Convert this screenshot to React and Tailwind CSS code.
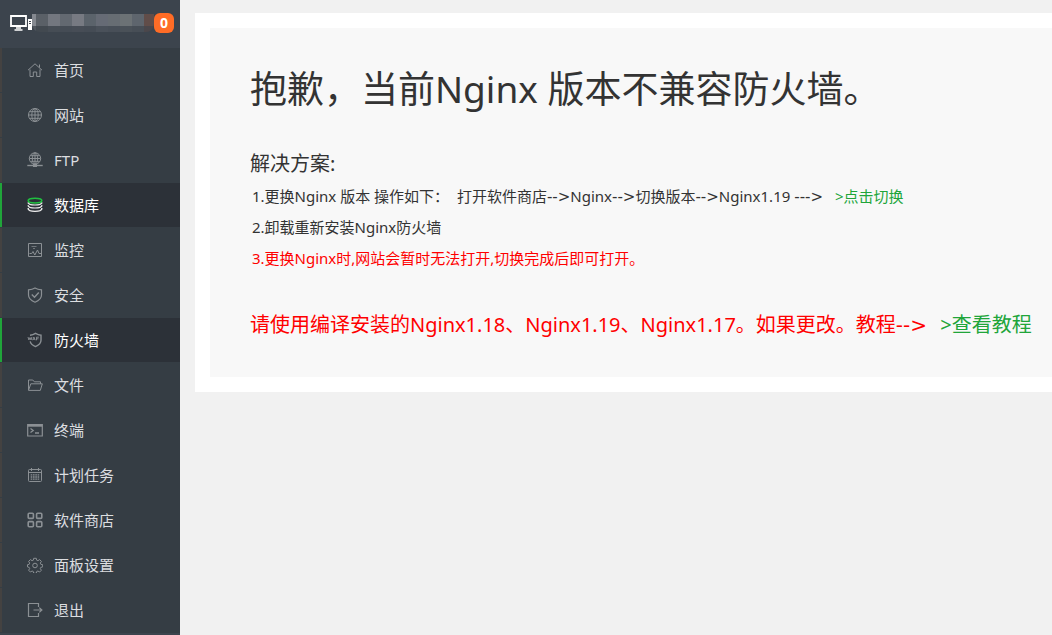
import React, { useState } from 'react';

const icons = {
  home: (
    <>
      <path d="M1 8.2 8 1.800l7 6.400" />
      <path d="M3 7.500v7h3.300V10h3.400v4.500H13v-7M12.500 5.500V2.500" />
    </>
  ),
  site: (
    <>
      <circle cx="8" cy="8" r="6.500" />
      <ellipse cx="8" cy="8" rx="3.200" ry="6.500" />
      <path d="M8 1.500v13M1.500 8h13M2.500 4.700h11M2.500 11.300h11" />
    </>
  ),
  ftp: (
    <>
      <circle cx="8" cy="6.500" r="5.700" />
      <ellipse cx="8" cy="6.500" rx="2.700" ry="5.700" />
      <path d="M8 1v13M2.500 6.500h11M3.500 3.700h9M3.500 9.300h9" />
      <path d="M.3 13.500h15.400" strokeWidth="1.400" />
      <path d="M6 13.500h4" strokeWidth="3" />
    </>
  ),
  database: (
    <>
      <g stroke="#f0f0f0" strokeWidth="1.200">
        <path d="M1.200 5.600c.6 3.200 13 3.200 13.600 0M1.200 8.600c.6 3.200 13 3.200 13.600 0M1.200 11.600c.6 3.600 13 3.600 13.600 0" />
        <path d="M1.200 5.400v1M14.800 5.400v1M1.200 8.200v1M14.800 8.200v1M1.200 11v1.400M14.800 11v1.400" />
      </g>
      <ellipse cx="8" cy="3.600" rx="6.800" ry="2.400" stroke="#20c040" strokeWidth="1.600" />
    </>
  ),
  monitor: (
    <>
      <path d="M1.500 1.500h13v13h-13z" />
      <path d="M4.500 4.500h5M6 6.500h2" strokeOpacity=".7" />
      <path d="M2.500 11.500h2.200l1.300-2 1.800 3.500 2.700-5 1.500 3.500h2" />
    </>
  ),
  safe: (
    <>
      <path d="M8 1c2 1.200 4 1.700 6.500 1.900V8c0 3.400-3 5.800-6.500 7.200C4.500 13.800 1.500 11.400 1.500 8V2.900C4 2.700 6 2.200 8 1z" strokeWidth="1.200" />
      <path d="m4.800 7.500 2.700 2.700 4.300-4.700" strokeWidth="1.400" />
    </>
  ),
  waf: (
    <>
      <path d="M3 3.200C5 3 6.600 2.500 8.500 1.300c2 1.200 3.500 1.700 5.500 1.900v5c0 3-2.400 5-5.500 6.400-2.700-1.200-4.800-2.900-5.300-5.300" strokeWidth="1.400" />
      <path d="m1 5 .9 3L3 5.500 4 8l.9-3M5.600 8.200 6.900 5l1.300 3.200M6.100 7.300h1.600M9.500 8.300V5.200h2.400M9.500 6.800h2" strokeWidth=".9" />
    </>
  ),
  folder: (
    <>
      <path d="M1.500 13V3h4.300l1.500 1.800h6.200v2" />
      <path d="M1.500 13.400 3.800 6.800h11.500l-2 6.600z" />
    </>
  ),
  terminal: (
    <>
      <path d="M.7 2.500h14.600v11.500H.7z" strokeWidth="1.200" />
      <path d="M.7 3.500h14.600" strokeWidth="2.400" />
      <path d="m3.500 6.500 2.700 2-2.700 2M8 11h4" strokeWidth="1.300" />
    </>
  ),
  calendar: (
    <>
      <rect x="1.500" y="2.500" width="13" height="12" rx="1" />
      <path d="M1.500 5.500h13M4.500 1v3M11.500 1v3" />
      <path d="M3.700 7.800h8.600M3.700 10h8.600M3.700 12.200h8.600" strokeDasharray="1.600 .7" strokeWidth="1.300" />
    </>
  ),
  store: (
    <g strokeWidth="1.600">
      <rect x="1.200" y="1.200" width="5.200" height="5.200" rx="1" />
      <rect x="9.600" y="1.200" width="5.200" height="5.200" rx="1" />
      <rect x="1.200" y="9.600" width="5.200" height="5.200" rx="1" />
      <rect x="9.600" y="9.600" width="5.200" height="5.200" rx="1" />
    </g>
  ),
  config: (
    <>
      <path d="M6.700 1.300h2.600l.4 1.900 1.200.5 1.700-1.100 1.800 1.800-1.100 1.700.5 1.200 1.900.4v2.200l-1.900.5-.5 1.200 1.100 1.600-1.800 1.800-1.700-1-1.200.5-.4 1.800H6.700l-.4-1.800-1.200-.5-1.700 1-1.800-1.800 1.100-1.600-.5-1.200-1.700-.5V7.700l1.700-.4.5-1.200-1.100-1.700 1.800-1.800 1.700 1.100 1.200-.5z" />
      <circle cx="8" cy="8.500" r="2.300" />
    </>
  ),
  logout: (
    <path d="M11.500 5V1.500h-10v13h10V11M6.500 8h8.500M12.300 5.600 14.900 8l-2.600 2.400" strokeWidth="1.200" />
  ),
};

const menu = [
  { icon: 'home', label: '首页' },
  { icon: 'site', label: '网站' },
  { icon: 'ftp', label: 'FTP' },
  { icon: 'database', label: '数据库' },
  { icon: 'monitor', label: '监控' },
  { icon: 'safe', label: '安全' },
  { icon: 'waf', label: '防火墙' },
  { icon: 'folder', label: '文件' },
  { icon: 'terminal', label: '终端' },
  { icon: 'calendar', label: '计划任务' },
  { icon: 'store', label: '软件商店' },
  { icon: 'config', label: '面板设置' },
  { icon: 'logout', label: '退出' },
];

const maskTop = ['bg-[#5a6067]', 'bg-[#73777f]', 'bg-[#636971]', 'bg-[#777a82]', 'bg-[#5b636b]', 'bg-[#666b75]', 'bg-[#676d73]', 'bg-[#6c7275]', 'bg-[#5e656d]'];
const maskBottom = ['bg-[#424950]', 'bg-[#464d55]', 'bg-[#454c55]', 'bg-[#474d56]', 'bg-[#454c55]', 'bg-[#4a515a]', 'bg-[#484f58]', 'bg-[#4a5158]', 'bg-[#474e56]'];

const Arrow = ({ children }) => <span className="font-['DejaVu_Sans',sans-serif] leading-none">{children}</span>;

const Sidebar = () => {
  const [hovered, setHovered] = useState('数据库');
  const current = '防火墙';

  return (
    <aside className="w-[180px] shrink-0 bg-[#3c444d]">
      <header className="flex h-12 items-center pl-[10px] pr-[6px] pb-[2px]">
        <svg viewBox="0 0 22 16" className="h-4 w-[22px] shrink-0" fill="none" stroke="#fff">
          <path d="M1 1h15v10H1z" strokeWidth="1.800" />
          <path d="M6 13h5M4.500 15h8" strokeWidth="1.500" />
          <path d="M18 4h4v11h-4z" fill="#fff" stroke="none" />
          <path d="M19 6.500h2M19 8.500h2" stroke="#3c444d" />
        </svg>
        <div className="min-w-0 flex-1 overflow-hidden rounded-b-lg">
          <div className="flex h-3">
            <span className="w-1 bg-[#858990]" />
            {maskTop.map((c, i) => <span key={i} className={`w-3 ${c}`} />)}
            <span className="flex-1 bg-[#614d49]" />
          </div>
          <div className="flex h-[6px]">
            <span className="w-1 bg-[#50565e]" />
            {maskBottom.map((c, i) => <span key={i} className={`w-3 ${c}`} />)}
            <span className="flex-1 bg-[#4b474b]" />
          </div>
        </div>
        <span className="flex h-5 w-5 items-center justify-center rounded-md bg-[#ff6c26] text-sm font-bold text-white">0</span>
      </header>
      <nav>
        <ul>
          {menu.map(({ icon, label }) => {
            const active = label === current || label === hovered;
            return (
              <li key={label} className="border-b border-[#353d44]">
                <a
                  href="#"
                  onMouseEnter={() => setHovered(label)}
                  className={`flex h-11 items-center border-l-2 pl-[25px] text-[15px] ${
                    active ? 'border-[#20a53a] bg-[#2c3138] text-white' : 'border-[#444241] bg-[#353d44] text-[#dcdee0]'
                  }`}
                >
                  <svg viewBox="0 0 16 16" className="mr-[11px] h-4 w-4" fill="none" stroke="#8b9094">
                    {icons[icon]}
                  </svg>
                  {label}
                </a>
              </li>
            );
          })}
        </ul>
      </nav>
    </aside>
  );
};

const App = () => {
  return (
    <div className="flex min-h-screen overflow-hidden bg-[#f1f1f1] font-['Noto_Sans','Noto_Sans_CJK_SC',sans-serif] text-[#333]">
      <Sidebar />
      <main className="min-w-0 flex-1 pl-[15px] pt-[13px]">
        <div className="bg-white py-[15px] pl-[15px]">
          <section className="whitespace-nowrap bg-[#f8f8f8] pb-[37px] pl-10 pt-[34px]">
            <h1 className="text-[37px] leading-[54px]">抱歉，当前Nginx 版本不兼容防火墙。</h1>
            <h2 className="mt-[33px] text-[20px] leading-[30px]">解决方案:</h2>
            <ul className="mt-[2px] pl-[2px] text-[15px] leading-[31px]">
              <li>
                1.更换Nginx 版本 操作如下：&nbsp; 打开软件商店<Arrow>--&gt;</Arrow>Nginx<Arrow>--&gt;</Arrow>切换版本<Arrow>--&gt;</Arrow>Nginx1.19 <Arrow>---&gt;</Arrow>{' '}
                <a href="#" className="ml-2 text-[#20a53a]">&gt;点击切换</a>
              </li>
              <li>2.卸载重新安装Nginx防火墙</li>
              <li className="text-[#f00]">3.更换Nginx时,网站会暂时无法打开,切换完成后即可打开。</li>
            </ul>
            <p className="mt-9 text-[20px] leading-[30px] text-[#f00]">
              请使用编译安装的Nginx1.18、Nginx1.19、Nginx1.17。如果更改。教程<Arrow>--&gt;</Arrow>{' '}
              <a href="#" className="ml-2 text-[#20a53a]">&gt;查看教程</a>
            </p>
          </section>
        </div>
      </main>
    </div>
  );
};

export default App;
